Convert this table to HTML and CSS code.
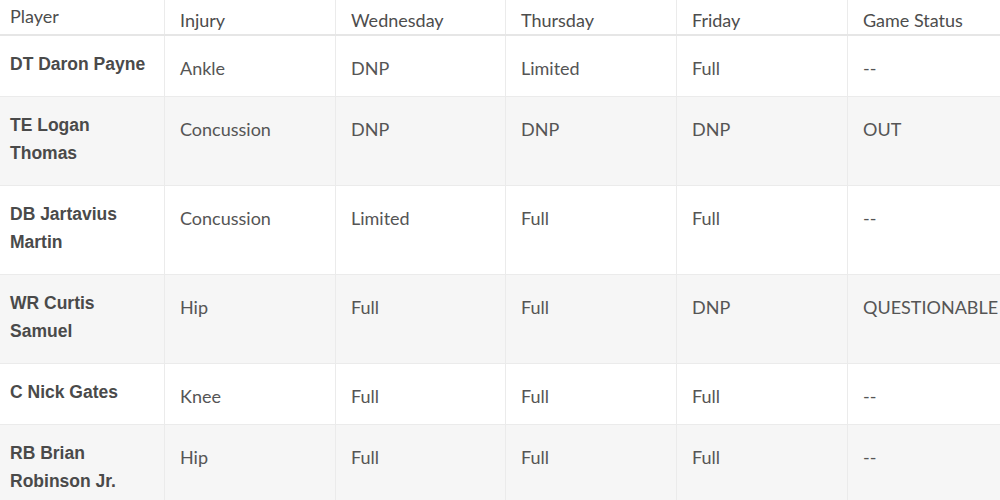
FILE: index.html
```html
<!DOCTYPE html>
<html>
<head>
<meta charset="utf-8">
<link rel="stylesheet" href="styles.css">
</head>
<body>
<table class="report">
  <colgroup>
    <col class="c-player"><col class="c-a"><col class="c-b"><col class="c-a"><col class="c-a"><col class="c-a">
  </colgroup>
  <thead>
    <tr>
      <th class="player">Player</th>
      <th>Injury</th>
      <th>Wednesday</th>
      <th>Thursday</th>
      <th>Friday</th>
      <th>Game Status</th>
    </tr>
  </thead>
  <tbody>
    <tr>
      <td class="player">DT Daron Payne</td>
      <td>Ankle</td><td>DNP</td><td>Limited</td><td>Full</td><td>--</td>
    </tr>
    <tr class="alt">
      <td class="player">TE Logan Thomas</td>
      <td>Concussion</td><td>DNP</td><td>DNP</td><td>DNP</td><td>OUT</td>
    </tr>
    <tr>
      <td class="player">DB Jartavius Martin</td>
      <td>Concussion</td><td>Limited</td><td>Full</td><td>Full</td><td>--</td>
    </tr>
    <tr class="alt">
      <td class="player">WR Curtis Samuel</td>
      <td>Hip</td><td>Full</td><td>Full</td><td>DNP</td><td>QUESTIONABLE</td>
    </tr>
    <tr>
      <td class="player">C Nick Gates</td>
      <td>Knee</td><td>Full</td><td>Full</td><td>Full</td><td>--</td>
    </tr>
    <tr class="alt">
      <td class="player">RB Brian Robinson Jr.</td>
      <td>Hip</td><td>Full</td><td>Full</td><td>Full</td><td>--</td>
    </tr>
  </tbody>
</table>
</body>
</html>
```
FILE: styles.css
```css
html, body {
  margin: 0;
  padding: 0;
  background: #ffffff;
}
body {
  width: 1000px;
  height: 500px;
  overflow: hidden;
}
.report {
  width: 1020px;
  margin-left: -1px;
  border-collapse: collapse;
  table-layout: fixed;
  font-family: Lato, "Open Sans", sans-serif;
  font-size: 18px;
  color: #555555;
}
.c-player { width: 165px; }
.c-a { width: 171px; }
.c-b { width: 170px; }
.report th,
.report td {
  border: 1px solid #ebebeb;
  text-align: left;
  vertical-align: top;
  line-height: 28px;
  padding: 18px 10px 14px 15px;
}
.report th {
  font-weight: 400;
  height: 33px;
  padding: 6px 10px 0 15px;
  box-sizing: border-box;
  color: #4d4d4d;
  border-top: none;
  border-bottom: 2px solid #e6e6e6;
}
.report th.player {
  padding-top: 2px;
  padding-left: 10px;
}
.report td.player {
  font-family: "Liberation Sans", Arial, sans-serif;
  font-size: 17.5px;
  font-weight: 700;
  color: #4a4a4a;
  padding: 14px 10px 18px 10px;
}
.report tr.alt td {
  background: #f6f6f6;
}
```
